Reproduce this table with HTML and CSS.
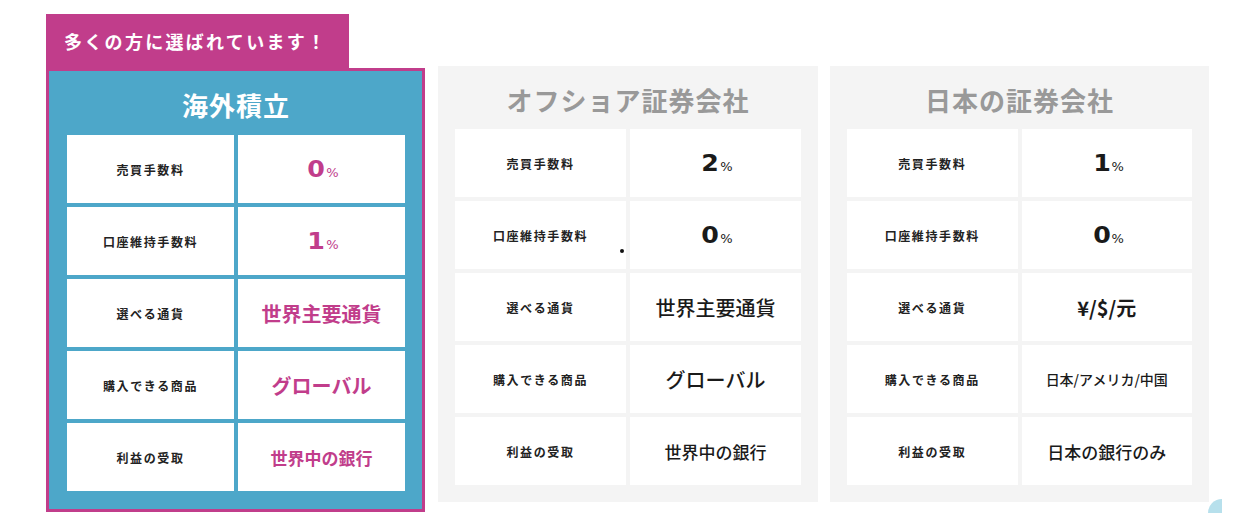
FILE: index.html
```html
<!DOCTYPE html>
<html lang="ja">
<head>
<meta charset="utf-8">
<title>比較表</title>
<link rel="stylesheet" href="styles.css">
</head>
<body>
<div class="wrap">
  <div class="featured">
    <div class="tag">多くの方に選ばれています！</div>
    <div class="box">
      <div class="title title-white">海外積立</div>
      <div class="grid">
        <div class="cell label">売買手数料</div>
        <div class="cell val pink"><span class="rate"><span class="num">0</span><span class="pct">%</span></span></div>
        <div class="cell label">口座維持手数料</div>
        <div class="cell val pink"><span class="rate"><span class="num">1</span><span class="pct">%</span></span></div>
        <div class="cell label">選べる通貨</div>
        <div class="cell val pink big">世界主要通貨</div>
        <div class="cell label">購入できる商品</div>
        <div class="cell val pink big">グローバル</div>
        <div class="cell label">利益の受取</div>
        <div class="cell val pink mid">世界中の銀行</div>
      </div>
    </div>
  </div>

  <div class="card card-mid">
    <div class="title title-gray">オフショア証券会社</div>
    <div class="grid">
      <div class="cell label">売買手数料</div>
      <div class="cell val"><span class="rate"><span class="num">2</span><span class="pct">%</span></span></div>
      <div class="cell label">口座維持手数料</div>
      <div class="cell val"><span class="rate"><span class="num">0</span><span class="pct">%</span></span></div>
      <div class="cell label">選べる通貨</div>
      <div class="cell val big">世界主要通貨</div>
      <div class="cell label">購入できる商品</div>
      <div class="cell val big">グローバル</div>
      <div class="cell label">利益の受取</div>
      <div class="cell val mid">世界中の銀行</div>
    </div>
  </div>

  <div class="card card-right">
    <div class="title title-gray">日本の証券会社</div>
    <div class="grid">
      <div class="cell label">売買手数料</div>
      <div class="cell val"><span class="rate"><span class="num">1</span><span class="pct">%</span></span></div>
      <div class="cell label">口座維持手数料</div>
      <div class="cell val"><span class="rate"><span class="num">0</span><span class="pct">%</span></span></div>
      <div class="cell label">選べる通貨</div>
      <div class="cell val big heavy">¥/$/元</div>
      <div class="cell label">購入できる商品</div>
      <div class="cell val small">日本/アメリカ/中国</div>
      <div class="cell label">利益の受取</div>
      <div class="cell val mid">日本の銀行のみ</div>
    </div>
  </div>
</div>
<div class="dot"></div>
<div class="deco"></div>
</body>
</html>
```

FILE: styles.css
```css
html, body {
  margin: 0;
  padding: 0;
  background: #ffffff;
}

body {
  font-family: "Noto Sans CJK JP", "Noto Sans", sans-serif;
  color: #222222;
  width: 1240px;
  height: 528px;
  overflow: hidden;
  position: relative;
}

.wrap {
  display: flex;
  align-items: flex-start;
  padding: 14px 0 0 46px;
}

.featured {
  width: 379px;
  display: flex;
  flex-direction: column;
}

.tag {
  width: 303px;
  height: 54px;
  box-sizing: border-box;
  background: #c13d8b;
  color: #ffffff;
  font-size: 18px;
  font-weight: 700;
  letter-spacing: 2.3px;
  padding-left: 18px;
  display: flex;
  align-items: center;
}

.box {
  box-sizing: border-box;
  width: 379px;
  border: 3px solid #c13d8b;
  background: #4da7c9;
  padding: 0 17px 18px 18px;
}

.card {
  box-sizing: border-box;
  background: #f4f4f4;
  margin-top: 52px;
  padding: 0 17px 17px 17px;
}

.card-mid {
  width: 380px;
  margin-left: 13px;
}

.card-right {
  width: 379px;
  margin-left: 12px;
}

.title {
  text-align: center;
  font-weight: 700;
  font-size: 26px;
  letter-spacing: 1px;
}

.title-white {
  color: #ffffff;
  padding-top: 4px;
  line-height: 60px;
}

.title-gray {
  color: #999999;
  padding-top: 5px;
  line-height: 58px;
}

.grid {
  display: grid;
  grid-template-columns: 1fr 1fr;
  grid-auto-rows: 68px;
  gap: 4px;
}

.cell {
  background: #ffffff;
  display: flex;
  align-items: center;
  justify-content: center;
}

.label {
  font-size: 12px;
  font-weight: 700;
  letter-spacing: 1.6px;
  color: #222222;
}

.val {
  color: #1a1a1a;
  font-weight: 500;
}

.val.pink {
  color: #c13d8b;
  font-weight: 700;
}

.rate {
  white-space: nowrap;
  line-height: 1;
  padding-left: 4px;
}

.num {
  font-family: "DejaVu Sans", sans-serif;
  font-weight: 700;
  font-size: 23px;
  display: inline-block;
  transform: scaleX(1.1);
  margin-right: 2px;
}

.pct {
  font-family: "DejaVu Sans", sans-serif;
  font-size: 13px;
  font-weight: 400;
}

.big {
  font-size: 20px;
}

.mid {
  font-size: 17px;
}

.small {
  font-size: 14px;
}

.heavy {
  font-weight: 700;
}

.dot {
  position: absolute;
  left: 620px;
  top: 249px;
  width: 4px;
  height: 4px;
  border-radius: 50%;
  background: #111111;
}

.deco {
  position: absolute;
  left: 1208px;
  top: 499px;
  width: 14px;
  height: 14px;
  border-top-left-radius: 14px;
  background: #b7e0ec;
}
```
